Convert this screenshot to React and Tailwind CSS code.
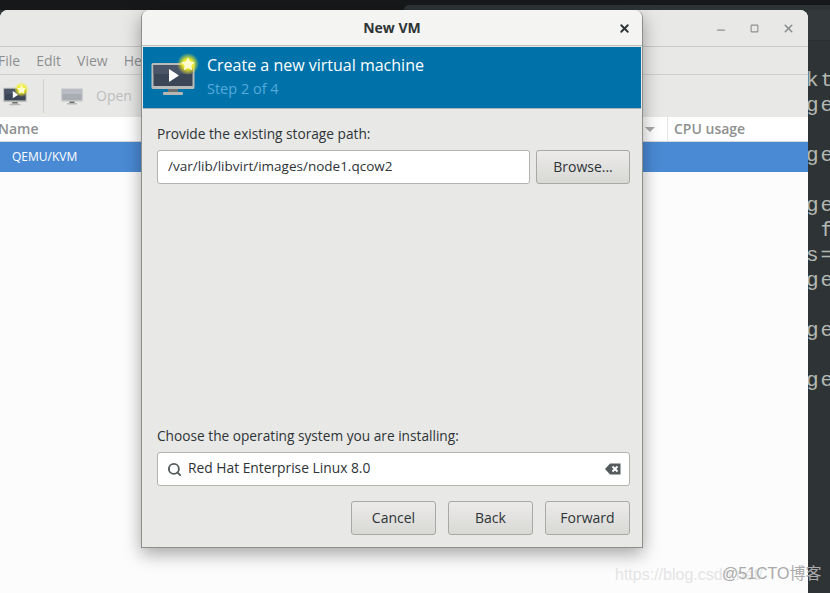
import React from "react";
import { Search, Minus, Square, X } from "lucide-react";

const ui = "font-['Open_Sans',sans-serif]";

const MonitorIcon = ({ className, dim }) => (
  <svg viewBox="0 0 44 36" className={className}>
    <rect x="0.5" y="3" width="43" height="26" rx="1.5" fill={dim ? "#c4c6c6" : "#b9bbb8"} />
    <rect x="2.5" y="5" width="39" height="21" fill={dim ? "#a9aeb5" : "#3b4657"} />
    <rect x="2.5" y="5" width="39" height="9" fill={dim ? "#b9bdc3" : "#4a5568"} />
    <rect x="17" y="29" width="10" height="3" fill="#6d6f6f" />
    <rect x="12" y="32" width="20" height="3" rx="1" fill="#b5b7b5" />
    {!dim && <path d="M18 9 L28 15.5 L18 22 Z" fill="#ffffff" />}
  </svg>
);

const Star = ({ className }) => (
  <svg viewBox="0 0 24 24" className={className}>
    <defs>
      <radialGradient id="glow">
        <stop offset="0.45" stopColor="#f6f01e" stopOpacity="0.95" />
        <stop offset="1" stopColor="#f6f01e" stopOpacity="0" />
      </radialGradient>
    </defs>
    <circle cx="12" cy="12" r="12" fill="url(#glow)" />
    <path d="M12 4.5l2.3 4.8 5.2.7-3.8 3.6.9 5.2-4.6-2.5-4.6 2.5.9-5.2L4.5 10l5.2-.7z" fill="#fffbd0" />
  </svg>
);

const GtkButton = ({ children, className }) => (
  <button className={`flex items-center justify-center rounded-[3px] border border-[#a8a8a5] bg-gradient-to-b from-[#ecebea] to-[#d8d8d5] pb-[2px] text-[14px] text-[#2e3436] ${className}`}>
    {children}
  </button>
);

const terminalLines = ["kt", "ge", "", "ge", "", "ge", " f", "s=", "ge", "", "ge", "", "ge"];

export default function App() {
  return (
    <div className={`relative flex h-[593px] w-[830px] flex-col overflow-hidden bg-[#2e3436] ${ui}`}>
      <div className="flex h-[10px] shrink-0 bg-[#16181a]">
        <div className="ml-[404px] mt-[5px] flex-1 rounded-tl-[6px] bg-[#2c3436]" />
      </div>
      <div className="flex min-h-0 flex-1">
        {/* back window */}
        <div className="flex w-[808px] shrink-0 flex-col overflow-hidden rounded-t-[8px] bg-[#fcfcfc]">
          <div className="flex h-[37px] shrink-0 items-center justify-end gap-[23px] border-b border-[#c9c9c6] bg-[#e8e8e7] pr-[13px] text-[#8c8e8e]">
            <Minus size={12} strokeWidth={2.5} className="mt-[4px]" />
            <Square size={9} strokeWidth={3} />
            <X size={13} strokeWidth={3} />
          </div>
          <div className="flex h-[28px] shrink-0 items-center gap-[16px] border-b border-[#cfcfcc] bg-[#e8e8e7] text-[14px] text-[#8e9090]">
            <span className="-ml-[2px]">File</span>
            <span>Edit</span>
            <span>View</span>
            <span>Help</span>
          </div>
          <div className="flex h-[42px] shrink-0 items-center bg-[#e8e8e7] text-[14px] text-[#bcbdbc]">
            <div className="relative ml-[3px] h-[22px] w-[24px]">
              <MonitorIcon className="h-[22px] w-[24px]" />
              <Star className="absolute -right-[2px] -top-[3px] h-[15px] w-[15px]" />
            </div>
            <div className="ml-[16px] h-[34px] w-px bg-[#d0d0cd]" />
            <MonitorIcon dim className="ml-[17px] h-[22px] w-[22px]" />
            <span className="ml-[13px] -mt-[2px]">Open</span>
          </div>
          <div className="flex h-[25px] shrink-0 items-center border-b border-[#d9d9d7] bg-white text-[14px] font-semibold text-[#8e9090]">
            <span className="-ml-[2px] -mt-[2px]">Name</span>
            <div className="ml-auto mr-[12px] h-0 w-0 border-x-[5px] border-t-[5px] border-x-transparent border-t-[#a9abab]" />
            <div className="h-[24px] w-px bg-[#e6e6e4]" />
            <span className="ml-[6px] -mt-[2px] w-[134px]">CPU usage</span>
          </div>
          <div className="flex h-[30px] shrink-0 items-center bg-[#4a8ad4] pl-[12px] text-[12px] text-white">QEMU/KVM</div>
        </div>
        {/* terminal behind */}
        <div className="min-w-0 flex-1 overflow-hidden">
          <div className="h-[31px] border-b border-[#2a2f31] bg-[#33393b]" />
          <div className="-ml-[2px] pt-[27px] font-['Liberation_Mono',monospace] text-[21px] leading-[25px] tracking-[1.8px] text-[#b4b8b2]">
            {terminalLines.map((line, i) => (
              <div key={i} className="h-[25px] whitespace-pre">{line}</div>
            ))}
          </div>
        </div>
      </div>

      {/* New VM dialog */}
      <div className="absolute left-[141px] top-[10px] flex h-[538px] w-[502px] flex-col overflow-hidden rounded-t-[8px] border border-t-0 border-[#8e8e8b] bg-[#e8e8e7] shadow-[0_6px_18px_rgba(0,0,0,0.35)]">
        <div className="relative flex h-[36px] shrink-0 items-center justify-center border-b border-[#bdbdba] bg-[#f4f4f3] text-[14px] font-bold text-[#2e3436]">
          New VM
          <X size={13} strokeWidth={3.5} className="absolute right-[11px] top-[12px] text-[#2e3436]" />
        </div>
        <div className="mx-px mt-px flex h-[62px] shrink-0 items-center border-b border-[#a9b4b9] bg-[#0072aa]">
          <div className="relative ml-[8px] h-[38px] w-[44px]">
            <MonitorIcon className="h-[38px] w-[44px]" />
            <Star className="absolute -right-[4px] -top-[6px] h-[22px] w-[22px]" />
          </div>
          <div className="ml-[12px] -mt-[2px]">
            <div className="text-[16px] leading-[22px] text-white">Create a new virtual machine</div>
            <div className="mt-[3px] text-[14.5px] leading-[20px] text-[#55aadd]">Step 2 of 4</div>
          </div>
        </div>
        <div className="flex flex-1 flex-col pl-[15px] pr-[12px]">
          <div className="mt-[15px] text-[13.7px] leading-[20px] text-[#2e3436]">Provide the existing storage path:</div>
          <div className="mt-[6px] flex h-[34px] gap-[6px]">
            <div className="flex w-[373px] items-center rounded-[3px] border border-[#b2b2af] bg-white pb-[2px] pl-[10px] text-[13.5px] text-[#2e3436]">
              /var/lib/libvirt/images/node1.qcow2
            </div>
            <GtkButton className="w-[94px]">Browse...</GtkButton>
          </div>
          <div className="mt-auto text-[13.7px] leading-[20px] text-[#2e3436]">Choose the operating system you are installing:</div>
          <div className="mt-[6px] flex h-[34px] items-center rounded-[3px] border border-[#b2b2af] bg-white pl-[9px] pr-[8px] text-[13.8px] text-[#2e3436]">
            <Search size={15} strokeWidth={3} className="text-[#555b5c]" />
            <span className="ml-[6px] -mt-[1px]">Red Hat Enterprise Linux 8.0</span>
            <svg viewBox="0 0 16 12" className="ml-auto h-[12px] w-[16px]">
              <path d="M5 0.5h10.5v11H5L0 6z" fill="#555b5c" />
              <path d="M7.5 3.5l5 5M12.5 3.5l-5 5" stroke="#fff" strokeWidth="2" />
            </svg>
          </div>
          <div className="mb-[12px] mt-[15px] flex h-[34px] justify-end gap-[12px]">
            <GtkButton className="w-[85px]">Cancel</GtkButton>
            <GtkButton className="w-[85px]">Back</GtkButton>
            <GtkButton className="w-[85px]">Forward</GtkButton>
          </div>
        </div>
      </div>

      {/* blog watermarks */}
      <div className="absolute left-[615px] top-[565px] font-['Liberation_Sans',sans-serif] text-[16px] leading-[20px] text-[#e4e4e4]">https://blog.csdn.net/</div>
      <div className="absolute left-[722px] top-[564px] font-['Liberation_Sans','Noto_Sans_CJK_SC',sans-serif] text-[16px] leading-[20px] text-[#a9a9a9]">@51CTO博客</div>
    </div>
  );
}
